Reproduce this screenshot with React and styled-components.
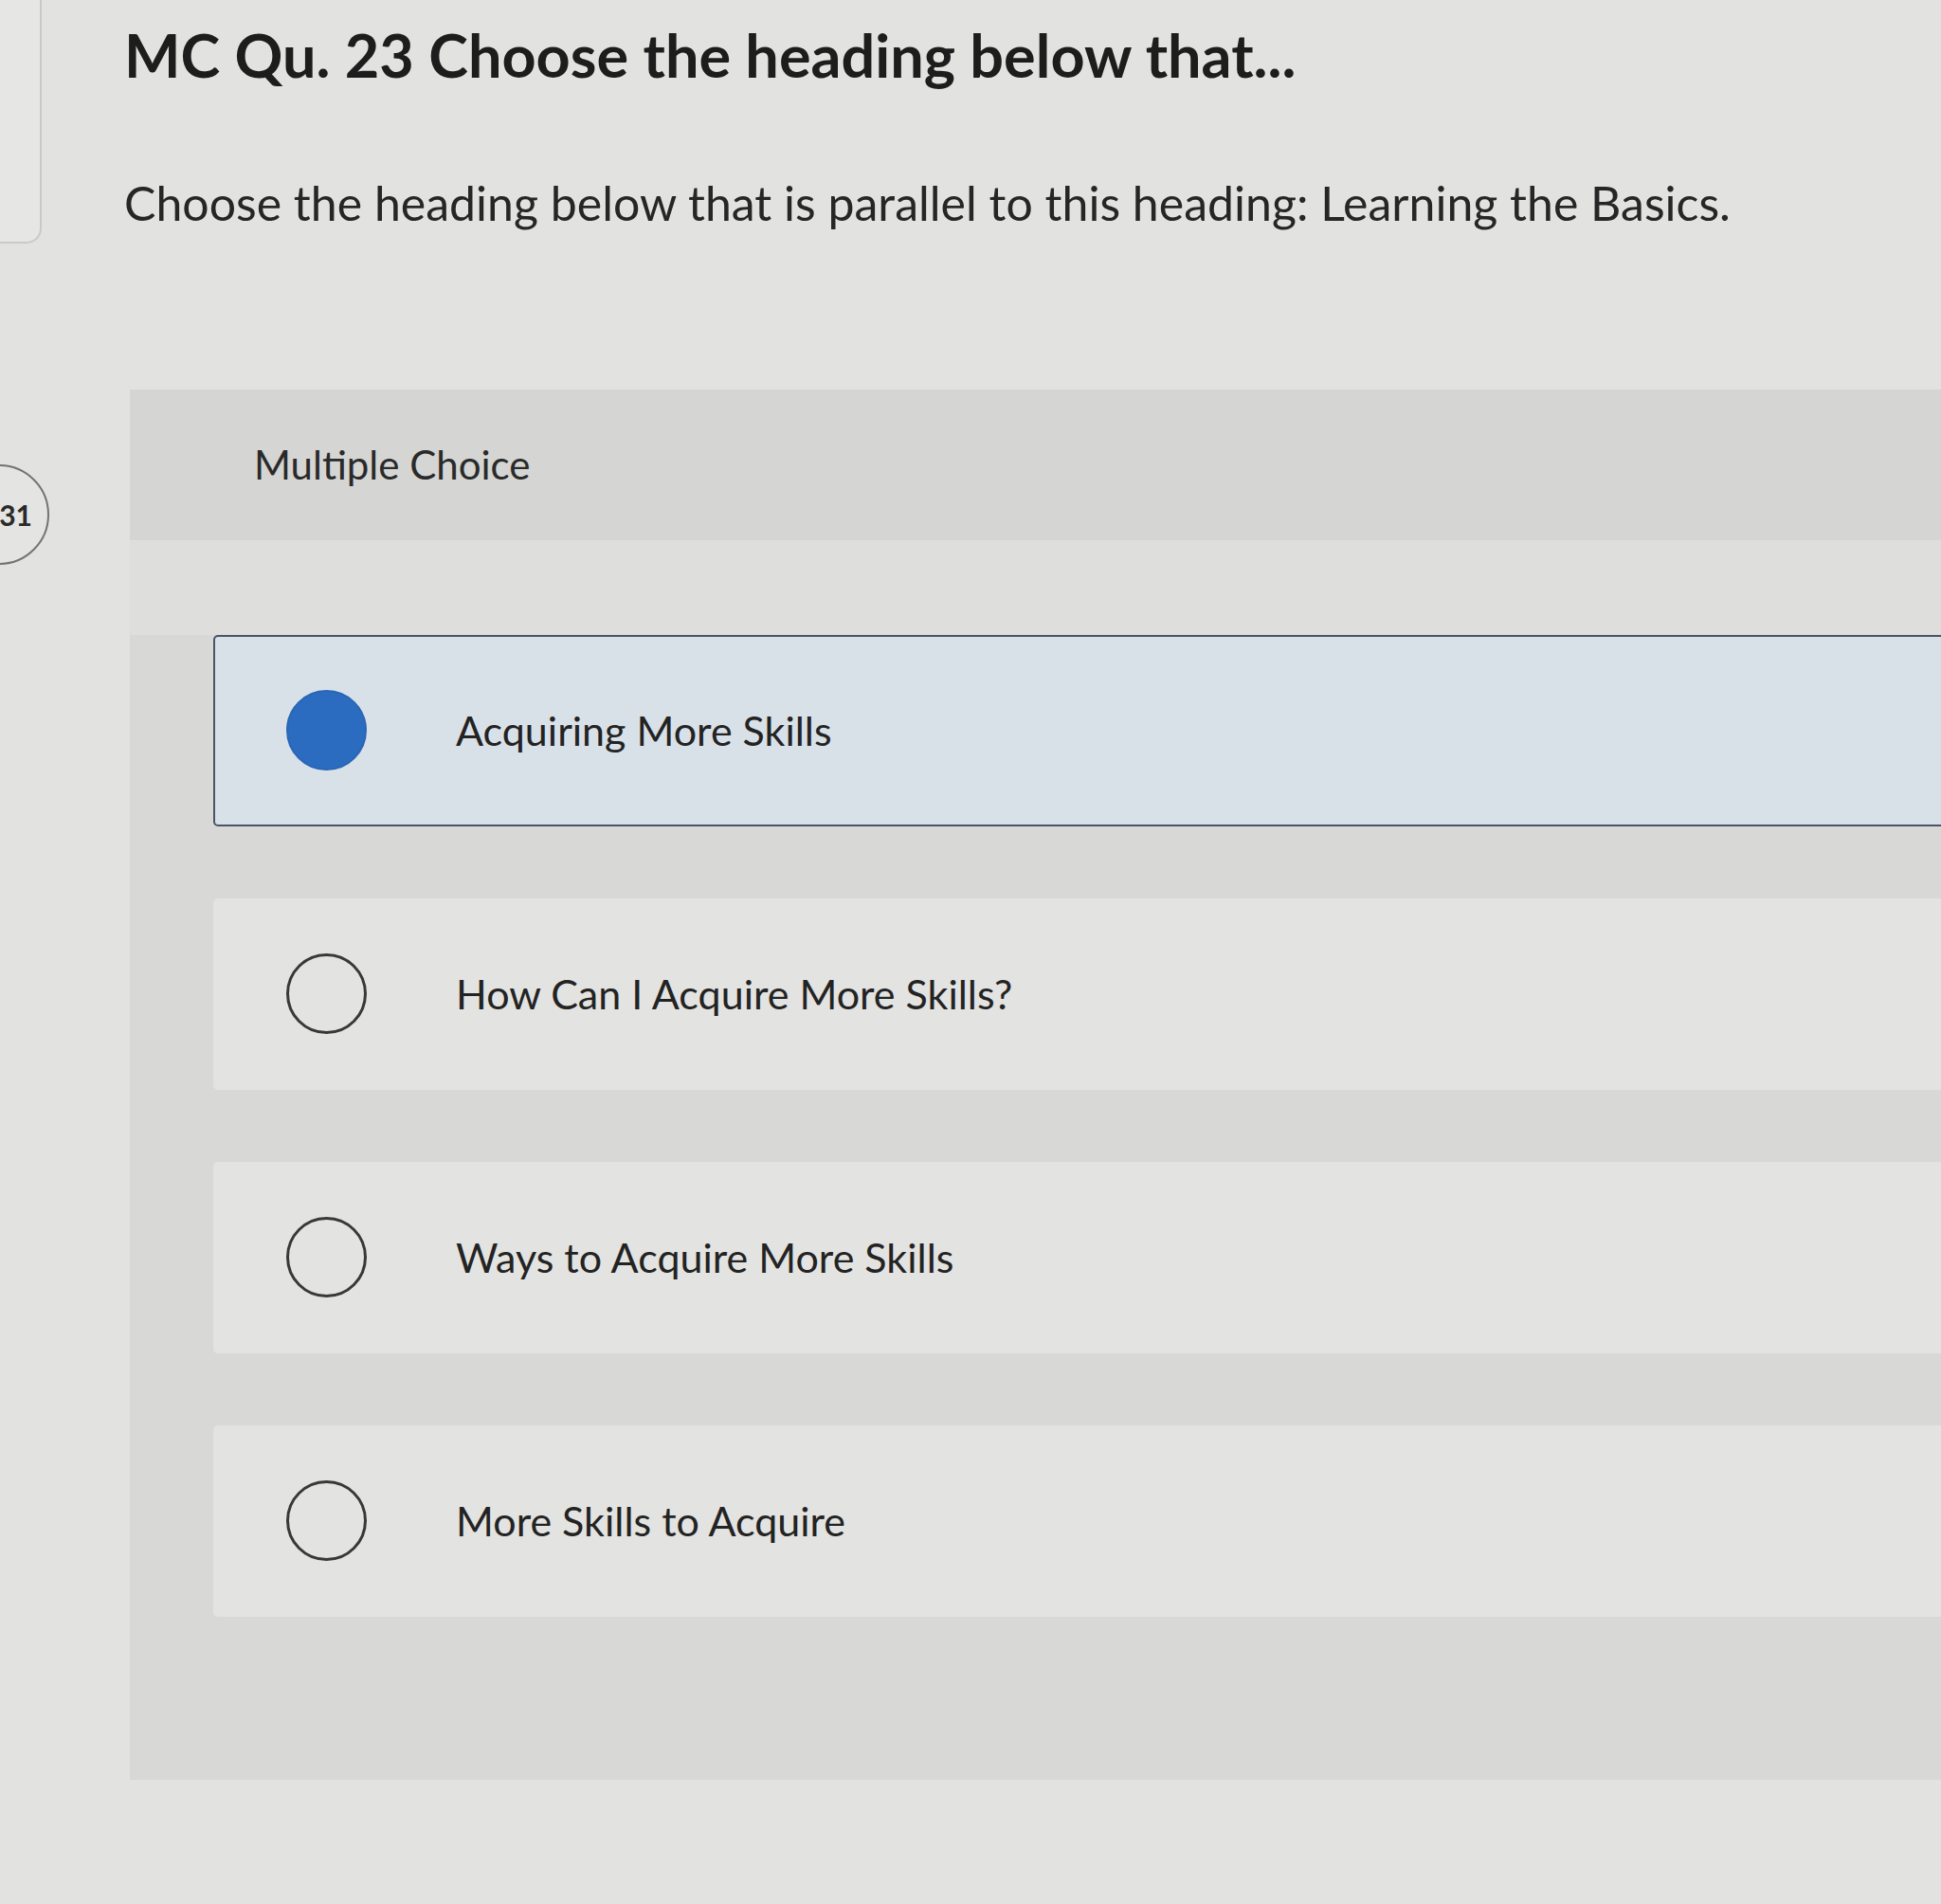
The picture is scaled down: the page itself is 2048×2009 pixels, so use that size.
import React, { useState } from 'react';
import styled, { createGlobalStyle } from 'styled-components';

const GlobalStyle = createGlobalStyle`
  html, body {
    margin: 0;
    padding: 0;
    background: #e2e2e0;
    overflow: hidden;
  }
  body {
    font-family: Lato, "Liberation Sans", Arial, sans-serif;
    color: #232323;
  }
`;

const Page = styled.div`
  display: flex;
  width: 2048px;
  min-height: 2009px;
  overflow: hidden;
`;

const Rail = styled.div`
  display: flex;
  flex-direction: column;
  width: 131px;
  flex-shrink: 0;
`;

const NavStub = styled.div`
  width: 42px;
  height: 255px;
  background: #e6e6e4;
  border-right: 2px solid #c9c9c7;
  border-bottom: 2px solid #c9c9c7;
  border-bottom-right-radius: 16px;
`;

const PageBadge = styled.div`
  display: flex;
  align-items: center;
  justify-content: flex-end;
  box-sizing: border-box;
  width: 120px;
  height: 106px;
  margin-top: 233px;
  margin-left: -68px;
  padding-right: 16px;
  border: 2px solid #737373;
  border-radius: 53px;
  background: #e4e4e2;
  font-size: 30px;
  font-weight: 700;
  color: #2a2a2a;
`;

const Main = styled.div`
  flex: 1;
  padding-top: 20px;
  margin-right: -60px;
`;

const Title = styled.h1`
  margin: 0;
  font-size: 63px;
  line-height: 1.2;
  font-weight: 700;
  color: #1d1d1d;
`;

const Prompt = styled.p`
  margin: 88px 0 0;
  font-size: 50px;
  line-height: 1.2;
  font-weight: 400;
  color: #262626;
`;

const Panel = styled.section`
  margin: 167px 0 0 6px;
  padding-bottom: 172px;
  background: #d8d8d6;
`;

const PanelHeader = styled.div`
  display: flex;
  align-items: center;
  height: 159px;
  padding-left: 131px;
  background: #d5d5d3;
  font-size: 42px;
  color: #2a2a2a;
`;

const Lead = styled.div`
  height: 100px;
  background: #dededc;
`;

const OptionList = styled.div`
  display: flex;
  flex-direction: column;
  gap: 76px;
  padding-left: 88px;
`;

const OptionRow = styled.label`
  display: flex;
  align-items: center;
  gap: 94px;
  box-sizing: border-box;
  height: 202px;
  padding-left: 75px;
  background: ${p => (p.$selected ? '#d9e1e8' : '#e3e3e1')};
  border: ${p => (p.$selected ? '2px solid #4a5468' : '2px solid transparent')};
  border-radius: 5px;
  cursor: pointer;
  font-size: 43px;
  color: #232323;
`;

const Radio = styled.span`
  flex-shrink: 0;
  box-sizing: border-box;
  width: 85px;
  height: 85px;
  border-radius: 50%;
  border: ${p => (p.$checked ? '2px solid #2a66b5' : '3px solid #383838')};
  background: ${p => (p.$checked ? '#2b6cc0' : 'transparent')};
`;

const options = [
  'Acquiring More Skills',
  'How Can I Acquire More Skills?',
  'Ways to Acquire More Skills',
  'More Skills to Acquire',
];

export default function App() {
  const [picked, setPicked] = useState(0);

  return (
    <>
      <GlobalStyle />
      <Page>
        <Rail>
          <NavStub />
          <PageBadge>31</PageBadge>
        </Rail>
        <Main>
          <Title>MC Qu. 23 Choose the heading below that...</Title>
          <Prompt>Choose the heading below that is parallel to this heading: Learning the Basics.</Prompt>
          <Panel>
            <PanelHeader>Multiple Choice</PanelHeader>
            <Lead />
            <OptionList>
              {options.map((text, i) => (
                <OptionRow key={text} $selected={picked === i} onClick={() => setPicked(i)}>
                  <Radio $checked={picked === i} />
                  {text}
                </OptionRow>
              ))}
            </OptionList>
          </Panel>
        </Main>
      </Page>
    </>
  );
}
